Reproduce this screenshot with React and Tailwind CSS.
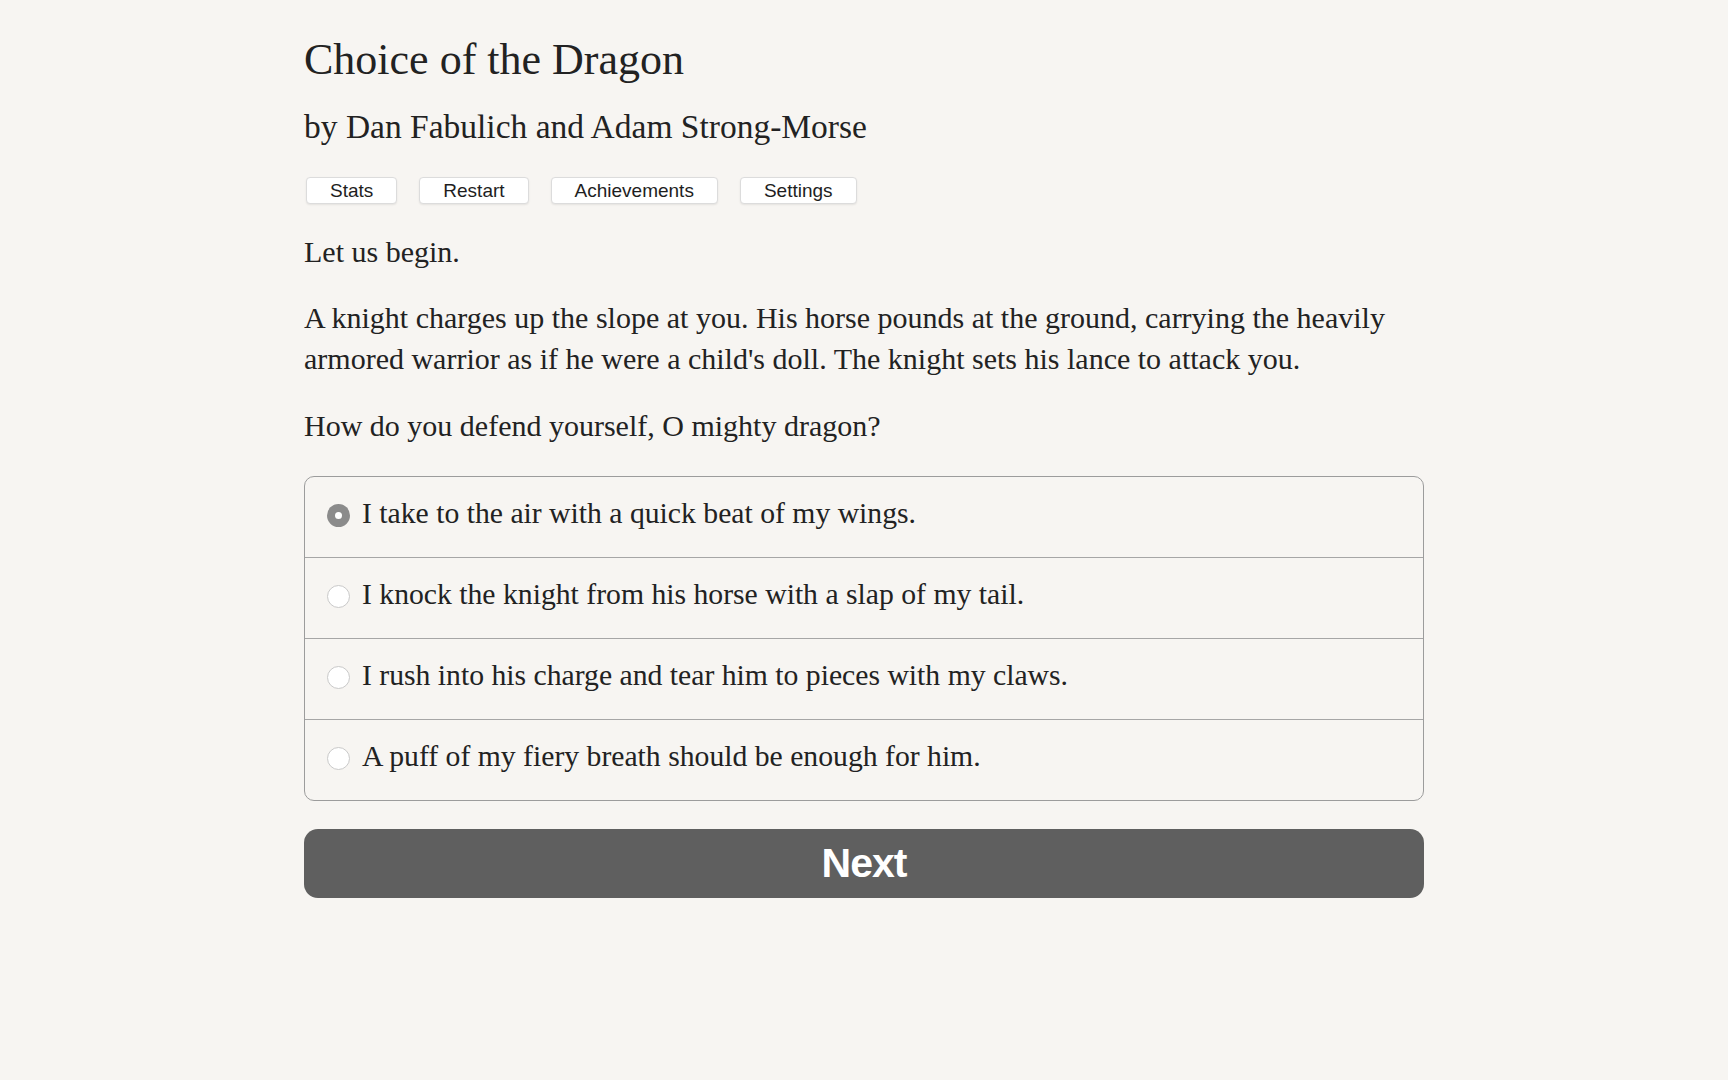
import React, { useState } from "react";

const choices = [
  "I take to the air with a quick beat of my wings.",
  "I knock the knight from his horse with a slap of my tail.",
  "I rush into his charge and tear him to pieces with my claws.",
  "A puff of my fiery breath should be enough for him.",
];

const menu = ["Stats", "Restart", "Achievements", "Settings"];

export default function App() {
  const [selected, setSelected] = useState(0);

  return (
    <div className="min-h-screen bg-[#f7f5f2] text-[#222] font-['Liberation_Serif',serif]">
      <div className="w-[1120px] mx-auto pt-[34px] pb-20">
        {/* Header */}
        <h1 className="text-[44px] leading-[52px] font-normal">Choice of the Dragon</h1>
        <h2 className="mt-[21px] text-[33.5px] leading-[40px] font-normal">
          by Dan Fabulich and Adam Strong-Morse
        </h2>

        <div className="mt-[30px] ml-[2px] flex gap-[22px]">
          {menu.map((label) => (
            <button
              key={label}
              className="h-[27px] px-[23px] flex items-center bg-white border border-[#dcdcdc] rounded-[4px] shadow-[0_1px_2px_rgba(0,0,0,0.08)] font-['Liberation_Sans',Arial,sans-serif] text-[19px] leading-none text-[#1e1e1e]"
            >
              {label}
            </button>
          ))}
        </div>

        {/* Story text */}
        <div className="mt-[27px] text-[30px] leading-[41px]">
          <p>Let us begin.</p>
          <p className="mt-[25px]">
            A knight charges up the slope at you. His horse pounds at the ground, carrying the heavily
            armored warrior as if he were a child's doll. The knight sets his lance to attack you.
          </p>
          <p className="mt-[26px]">How do you defend yourself, O mighty dragon?</p>
        </div>

        {/* Choices */}
        <div className="mt-[30px] border border-[#9c9c9c] rounded-[10px] overflow-hidden">
          {choices.map((text, i) => (
            <label
              key={i}
              onClick={() => setSelected(i)}
              className={`pl-[22px] pt-[17px] flex items-start gap-3 cursor-pointer ${
                i > 0 ? "border-t border-[#a6a6a6] h-[81px]" : "h-[80px]"
              }`}
            >
              <span className="mt-[10px] shrink-0">
                {selected === i ? (
                  <span className="w-[23px] h-[23px] rounded-full bg-[#8b8b8b] flex items-center justify-center">
                    <span className="w-[7px] h-[7px] rounded-full bg-white" />
                  </span>
                ) : (
                  <span className="block w-[23px] h-[23px] rounded-full bg-white border border-[#c9c9c9]" />
                )}
              </span>
              <span className="text-[29.7px] leading-[39px]">{text}</span>
            </label>
          ))}
        </div>

        <button className="mt-[28px] w-full h-[69px] rounded-[14px] bg-[#5f5f5f] text-white font-['Liberation_Sans',Arial,sans-serif] font-bold text-[41px] tracking-[-1px] flex items-center justify-center">
          Next
        </button>
      </div>
    </div>
  );
}
